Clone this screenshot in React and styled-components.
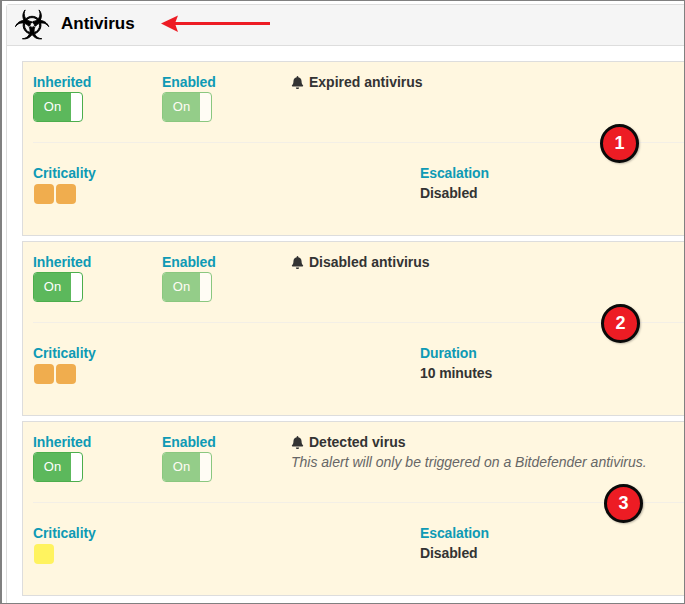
import React from 'react'
import styled, { createGlobalStyle } from 'styled-components'
import { FaBell } from 'react-icons/fa'
import { GiBiohazard } from 'react-icons/gi'

const GlobalStyle = createGlobalStyle`
  html, body {
    margin: 0;
    padding: 0;
    background: #fff;
    font-family: 'Liberation Sans', Arial, sans-serif;
    font-size: 14px;
    color: #333;
  }
`

const Frame = styled.div`
  position: relative;
  box-sizing: border-box;
  width: 685px;
  height: 604px;
  padding: 3px 0 0 4px;
  border: 1px solid #808080;
  border-left-width: 2px;
  overflow: hidden;
`

const Panel = styled.section`
  width: 720px;
  height: 620px;
  border: 1px solid #ddd;
  border-radius: 3px 0 0 0;
`

const PanelHeading = styled.header`
  display: flex;
  align-items: center;
  gap: 11px;
  height: 40px;
  padding-left: 7px;
  background: #f5f5f5;
  border-bottom: 1px solid #ddd;
`

const PanelTitle = styled.h3`
  margin: 0 0 3px;
  font-size: 17px;
  font-weight: 700;
  color: #000;
`

const Cards = styled.div`
  display: flex;
  flex-direction: column;
  gap: 5px;
  padding: 15px 0 0 15px;
`

const Card = styled.div`
  box-sizing: border-box;
  height: 175px;
  padding: 10px 0 0 10px;
  background: #fff7e0;
  border: 1px solid #ddd;
`

const TopRow = styled.div`
  display: grid;
  grid-template-columns: 129px 129px 1fr;
  height: 70px;
  border-bottom: 1px solid #f3efe6;
  box-sizing: content-box;
`

const BottomRow = styled.div`
  display: grid;
  grid-template-columns: 387px 1fr;
  padding-top: 20px;
`

const Label = styled.div`
  font-weight: 700;
  line-height: 20px;
  letter-spacing: -0.1px;
  color: #0e9ab5;
`

const Value = styled.div`
  font-weight: 700;
  line-height: 20px;
  letter-spacing: -0.1px;
  color: #333;
`

const Toggle = styled.div`
  display: flex;
  box-sizing: border-box;
  width: 50px;
  height: 30px;
  overflow: hidden;
  background: #fff;
  border: 1px solid #4cae4c;
  border-radius: 4px;
  opacity: ${(p) => (p.$dimmed ? 0.65 : 1)};
`

const ToggleOn = styled.span`
  width: 37px;
  background: #5cb85c;
  color: #fff;
  font-size: 13px;
  line-height: 27px;
  text-align: center;
`

const AlertTitle = styled.div`
  display: flex;
  align-items: center;
  gap: 5px;
  font-weight: 700;
  line-height: 20px;
  color: #333;
`

const AlertNote = styled.div`
  font-style: italic;
  line-height: 20px;
  color: #666;
`

const Squares = styled.div`
  display: flex;
  gap: 2px;
  margin: 1px 0 0 1px;
`

const Square = styled.span`
  width: 20px;
  height: 20px;
  border-radius: 4px;
  background: ${(p) => p.$color};
`

const Badge = styled.div`
  position: absolute;
  left: ${(p) => p.$left}px;
  top: ${(p) => p.$top}px;
  box-sizing: border-box;
  width: 39px;
  height: 39px;
  border: 3px solid #0a0a0a;
  border-radius: 50%;
  background: #ed1c24;
  color: #fff;
  font-size: 18px;
  font-weight: 700;
  line-height: 33px;
  text-align: center;
  box-shadow: 1px 1px 2px rgba(0, 0, 0, 0.25);
`

const Arrow = styled.svg`
  position: absolute;
  left: 158px;
  top: 13px;
`

const cards = [
  { alert: 'Expired antivirus', key2: 'Escalation', value: 'Disabled', squares: ['#f0ad4e', '#f0ad4e'] },
  { alert: 'Disabled antivirus', key2: 'Duration', value: '10 minutes', squares: ['#f0ad4e', '#f0ad4e'] },
  {
    alert: 'Detected virus',
    note: 'This alert will only be triggered on a Bitdefender antivirus.',
    key2: 'Escalation',
    value: 'Disabled',
    squares: ['#fff35f'],
  },
]

const badges = [
  { n: 1, left: 598, top: 123 },
  { n: 2, left: 599, top: 303 },
  { n: 3, left: 602, top: 483 },
]

function Switch({ dimmed }) {
  return (
    <Toggle $dimmed={dimmed}>
      <ToggleOn>On</ToggleOn>
    </Toggle>
  )
}

export default function App() {
  return (
    <Frame>
      <GlobalStyle />
      <Panel>
        <PanelHeading>
          <GiBiohazard size={36} color="#000" stroke="#000" strokeWidth={14} />
          <PanelTitle>Antivirus</PanelTitle>
        </PanelHeading>
        <Cards>
          {cards.map((c) => (
            <Card key={c.alert}>
              <TopRow>
                <div>
                  <Label>Inherited</Label>
                  <Switch />
                </div>
                <div>
                  <Label>Enabled</Label>
                  <Switch dimmed />
                </div>
                <div>
                  <AlertTitle>
                    <FaBell size={13} />
                    {c.alert}
                  </AlertTitle>
                  {c.note && <AlertNote>{c.note}</AlertNote>}
                </div>
              </TopRow>
              <BottomRow>
                <div>
                  <Label>Criticality</Label>
                  <Squares>
                    {c.squares.map((color, i) => (
                      <Square key={i} $color={color} />
                    ))}
                  </Squares>
                </div>
                <div>
                  <Label>{c.key2}</Label>
                  <Value>{c.value}</Value>
                </div>
              </BottomRow>
            </Card>
          ))}
        </Cards>
      </Panel>
      <Arrow width="112" height="20" viewBox="0 0 112 20">
        <path d="M1 9.5 L18 1.5 L15.5 8 L110 8 L110 11 L15.5 11 L18 18 Z" fill="#ed1c24" />
      </Arrow>
      {badges.map((b) => (
        <Badge key={b.n} $left={b.left} $top={b.top}>
          {b.n}
        </Badge>
      ))}
    </Frame>
  )
}
